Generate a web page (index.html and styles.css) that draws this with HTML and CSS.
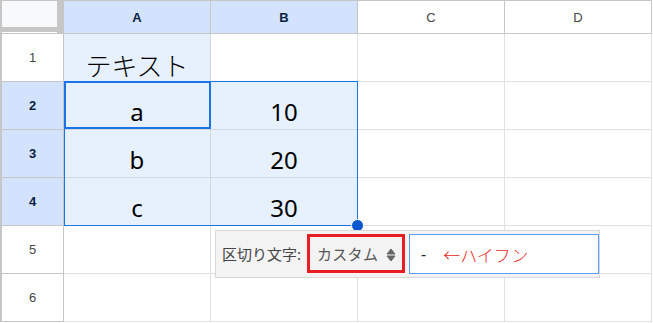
FILE: index.html
```html
<!DOCTYPE html>
<html lang="ja">
<head>
<meta charset="utf-8">
<title>Sheet</title>
<link rel="stylesheet" href="styles.css">
</head>
<body>
<div class="sheet">
  <div class="grid">
    <div class="corner"><div class="corner-box"></div><div class="corner-line"></div></div>
    <div class="colhead sel">A</div>
    <div class="colhead sel">B</div>
    <div class="colhead">C</div>
    <div class="colhead">D</div>

    <div class="rowhead">1</div>
    <div class="cell hl jp">テキスト</div>
    <div class="cell"></div>
    <div class="cell"></div>
    <div class="cell"></div>

    <div class="rowhead sel">2</div>
    <div class="cell hl">a</div>
    <div class="cell hl">10</div>
    <div class="cell"></div>
    <div class="cell"></div>

    <div class="rowhead sel">3</div>
    <div class="cell hl">b</div>
    <div class="cell hl">20</div>
    <div class="cell"></div>
    <div class="cell"></div>

    <div class="rowhead sel">4</div>
    <div class="cell hl">c</div>
    <div class="cell hl">30</div>
    <div class="cell"></div>
    <div class="cell"></div>

    <div class="rowhead">5</div>
    <div class="cell"></div>
    <div class="cell"></div>
    <div class="cell"></div>
    <div class="cell"></div>

    <div class="rowhead">6</div>
    <div class="cell"></div>
    <div class="cell"></div>
    <div class="cell"></div>
    <div class="cell"></div>
  </div>

  <div class="range"></div>
  <div class="active"></div>
  <div class="handle"></div>

  <div class="panel">
    <div class="label">区切り文字:</div>
    <div class="select">
      <span class="select-text">カスタム</span>
      <svg class="arrows" width="10" height="14" viewBox="0 0 10 14">
        <path d="M1 6 L5 1 L9 6 Z" fill="#666" stroke="#666" stroke-width="1" stroke-linejoin="round"/>
        <path d="M1 8 L5 13 L9 8 Z" fill="#666" stroke="#666" stroke-width="1" stroke-linejoin="round"/>
      </svg>
    </div>
    <div class="input">
      <span class="dash">-</span>
      <span class="note">←ハイフン</span>
    </div>
  </div>
</div>
</body>
</html>
```

FILE: styles.css
```css
html, body {
  margin: 0;
  padding: 0;
  background: #ffffff;
}

.sheet {
  position: relative;
  width: 653px;
  height: 323px;
  overflow: hidden;
  font-family: "Noto Sans", "Noto Sans CJK JP", sans-serif;
}

.grid {
  display: grid;
  grid-template-columns: 64px repeat(4, 147px);
  grid-template-rows: 34px repeat(6, 48px);
}

.grid > div {
  box-sizing: border-box;
}

.corner {
  background: #c6c6c6;
  padding: 1px 7px 0 2px;
  display: flex;
  flex-direction: column;
}

.corner-box {
  height: 26px;
  background: #f8f9fa;
}

.corner-line {
  margin-top: 5px;
  height: 1px;
  background: #ffffff;
}

.colhead {
  border-top: 1px solid #c4c7c5;
  border-bottom: 1px solid #c4c7c5;
  border-right: 1px solid #c4c7c5;
  background: #ffffff;
  display: flex;
  align-items: center;
  justify-content: center;
  font-family: "Liberation Sans", Arial, sans-serif;
  font-size: 13px;
  color: #444746;
}

.colhead.sel {
  background: #d3e3fd;
  color: #0a1f44;
  font-weight: bold;
}

.rowhead {
  border-left: 2px solid #c6c6c6;
  border-right: 1px solid #c4c7c5;
  border-bottom: 1px solid #c4c7c5;
  background: #ffffff;
  display: flex;
  align-items: center;
  justify-content: center;
  font-family: "Liberation Sans", Arial, sans-serif;
  font-size: 13px;
  color: #444746;
}

.rowhead.sel {
  background: #d3e3fd;
  color: #0a1f44;
  font-weight: bold;
}

.cell {
  border-right: 1px solid #e1e1e1;
  border-bottom: 1px solid #e1e1e1;
  display: flex;
  align-items: flex-end;
  justify-content: center;
  font-size: 24px;
  line-height: 28px;
  padding-bottom: 3px;
  color: #000000;
}

.cell.hl {
  background: #e7f0fd;
  border-color: #d2d9e3;
}

.cell.jp {
  font-family: "Noto Sans CJK JP", sans-serif;
  font-size: 26px;
  font-weight: 300;
  padding-bottom: 2px;
}

.range {
  position: absolute;
  left: 64px;
  top: 81px;
  width: 294px;
  height: 145px;
  box-sizing: border-box;
  border: 1px solid #1a73e8;
}

.active {
  position: absolute;
  left: 64px;
  top: 81px;
  width: 147px;
  height: 48px;
  box-sizing: border-box;
  border: 2px solid #1a73e8;
}

.handle {
  position: absolute;
  left: 351px;
  top: 219px;
  width: 13px;
  height: 13px;
  box-sizing: border-box;
  border-radius: 50%;
  background: #0b57d0;
  border: 1px solid #ffffff;
}

.panel {
  position: absolute;
  left: 215px;
  top: 230px;
  width: 385px;
  height: 48px;
  box-sizing: border-box;
  background: #f3f3f3;
  border: 1px solid #d9d9d9;
  padding: 3px 0 0 6px;
  display: flex;
  align-items: flex-start;
  font-family: "Noto Sans", "Noto Sans CJK JP", sans-serif;
}

.label {
  width: 85px;
  height: 39px;
  display: flex;
  align-items: center;
  font-size: 15px;
  color: #444444;
}

.select {
  width: 98px;
  height: 39px;
  box-sizing: border-box;
  border: 3px solid #ec1c24;
  padding: 0 6px 0 7px;
  display: flex;
  align-items: center;
  justify-content: space-between;
  font-size: 15px;
  color: #555555;
}

.select-text {
  letter-spacing: 0.3px;
}

.arrows {
  display: block;
  margin-top: 2px;
}

.input {
  margin-left: 4px;
  width: 190px;
  height: 40px;
  box-sizing: border-box;
  background: #ffffff;
  border: 1px solid #5b9cf6;
  padding-left: 11px;
  display: flex;
  align-items: center;
}

.dash {
  font-size: 16px;
  color: #222222;
}

.note {
  margin-left: 17px;
  font-family: "Noto Sans CJK JP", sans-serif;
  font-size: 17px;
  font-weight: 300;
  color: #ee1c25;
}
```
